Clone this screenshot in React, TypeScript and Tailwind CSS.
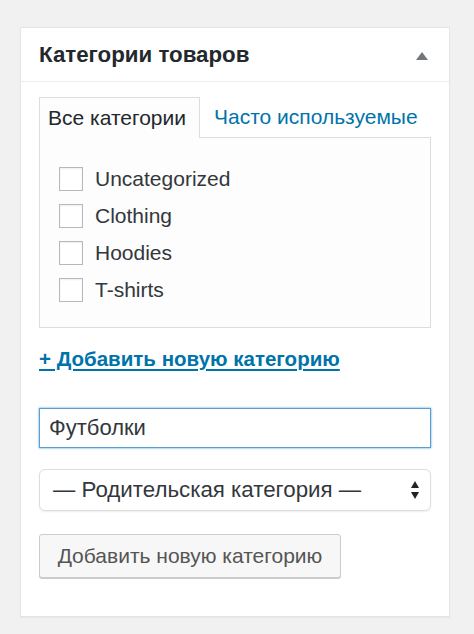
import { useState } from 'react'

const categories = ['Uncategorized', 'Clothing', 'Hoodies', 'T-shirts']

export default function App() {
  const [name, setName] = useState('Футболки')

  return (
    <div
      className="min-h-[634px] w-[474px] bg-[#f1f1f1] pt-[27px] pl-[20px] pr-[24px] pb-[19px]"
      style={{ fontFamily: '"Liberation Sans", Arial, sans-serif' }}
    >
      <div className="bg-white border border-[#e5e5e5] shadow-[0_1px_1px_rgba(0,0,0,0.04)]">
        <div className="flex items-center justify-between h-[54px] pl-[18px] pr-[20px] border-b border-[#eee]">
          <h2 className="text-[22.3px] font-bold text-[#23282d]">Категории товаров</h2>
          <svg width="14" height="10" viewBox="0 0 14 10" className="mt-[2px]">
            <path d="M7 1 L13 9 L1 9 Z" fill="#72777c" />
          </svg>
        </div>

        <div className="pl-[18px] pr-[18px] pt-[15px] pb-[38px]">
          <div className="flex items-end">
            <div className="relative z-10 -mb-px h-[41px] w-[161px] border border-b-0 border-[#ddd] bg-[#fdfdfd] flex items-center pl-[8px] text-[21px] text-[#23282d]">
              Все категории
            </div>
            <div className="h-[40px] flex items-center pl-[14px] text-[21px] text-[#0073aa]">Часто используемые</div>
          </div>
          <div className="border border-[#ddd] bg-[#fdfdfd] h-[191px] pt-[29px] pl-[19px]">
            <ul className="flex flex-col gap-[13px]">
              {categories.map(c => (
                <li key={c} className="flex items-center h-[24px]">
                  <span className="w-[24px] h-[24px] border border-[#b4b9be] bg-white shadow-[inset_0_1px_2px_rgba(0,0,0,0.07)]" />
                  <span className="ml-[12px] text-[21px] text-[#32373c]">{c}</span>
                </li>
              ))}
            </ul>
          </div>

          <a href="#" className="block mt-[19px] text-[20.5px] font-bold text-[#0073aa] underline underline-offset-[3px] leading-[24px]">
            + Добавить новую категорию
          </a>

          <input
            value={name}
            onChange={e => setName(e.target.value)}
            className="mt-[37px] block w-full h-[40px] border border-[#5b9dd9] shadow-[0_0_2px_rgba(30,140,190,0.8)] px-[9px] text-[22px] text-[#32373c] outline-none"
          />

          <div className="mt-[21px] flex items-center justify-between h-[42px] rounded-[6px] border border-[#ddd] bg-white shadow-[0_1px_2px_rgba(0,0,0,0.07)] pl-[13px] pr-[10px]">
            <span className="text-[22.3px] text-[#32373c]">— Родительская категория —</span>
            <svg width="10" height="22" viewBox="0 0 10 22">
              <path d="M5 2 L9 9 L1 9 Z" fill="#222" />
              <path d="M5 20 L9 13 L1 13 Z" fill="#222" />
            </svg>
          </div>

          <button className="mt-[23px] h-[44px] w-[302px] rounded-[3px] border border-[#ccc] bg-[#f7f7f7] shadow-[0_1px_0_#ccc] text-[21px] text-[#555]">
            Добавить новую категорию
          </button>
        </div>
      </div>
    </div>
  )
}
